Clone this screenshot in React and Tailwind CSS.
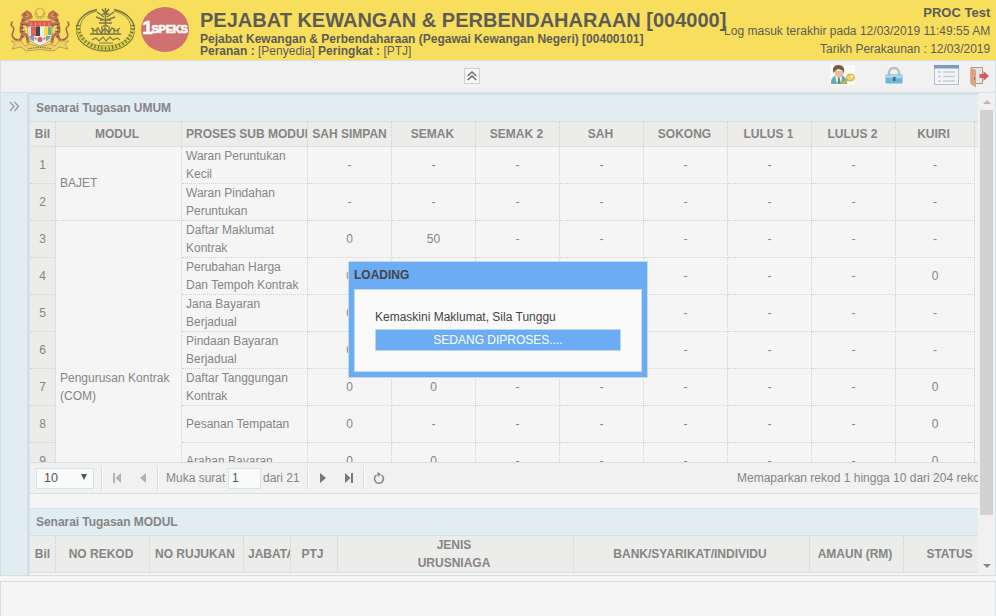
import React from "react";

const columns = ["SAH SIMPAN", "SEMAK", "SEMAK 2", "SAH", "SOKONG", "LULUS 1", "LULUS 2", "KUIRI"];

const rows = [
  ["Waran Peruntukan Kecil", "- - - - - - - -"],
  ["Waran Pindahan Peruntukan", "- - - - - - - -"],
  ["Daftar Maklumat Kontrak", "0 50 - - - - - -"],
  ["Perubahan Harga Dan Tempoh Kontrak", "0 - - - - - - 0"],
  ["Jana Bayaran Berjadual", "0 - - - - - - -"],
  ["Pindaan Bayaran Berjadual", "0 - - - - - - -"],
  ["Daftar Tanggungan Kontrak", "0 0 - - - - - 0"],
  ["Pesanan Tempatan", "0 - - - - - - 0"],
  ["Arahan Bayaran", "0 0 - - - - - 0"],
];

const dot = "border-r border-dotted border-[#d2d2d2]";
const cellWidth = (i) => (i === 7 ? "w-[79px]" : "w-[84px]");

function Tiger() {
  return (
    <g fill="none" strokeLinecap="round">
      <path d="M14 8l4-3 3 2 1 3-4 2M16 9l-3 7-1 8 2 4-3 5M14 16l6 2M14 26l4 3 1 6" stroke="#c07350" strokeWidth="3.2" />
      <path d="M15 7l4 2M13 13l4 1M12 17l4 1M11 21l4 0M12 25l4-1M12 29l3 1M18 17v3M18 31h2" stroke="#70504a" strokeWidth="1" />
      <path d="M10 33c-6 0-8-4-6-8s0-5-2-7l1-3" stroke="#b0654a" strokeWidth="1.6" />
    </g>
  );
}

function Crest() {
  return (
    <svg width="62" height="46" viewBox="0 0 62 46">
      <circle cx="31" cy="6.500" r="5" fill="none" stroke="#cdb452" strokeWidth="1.600" strokeDasharray="1.600 .6" />
      <path d="M27.500 5a3.700 3.700 0 1 0 7 0" fill="none" stroke="#b69d4b" strokeWidth="1" />
      <Tiger />
      <g transform="translate(62 0) scale(-1 1)"><Tiger /></g>
      <path d="M19 14h24v14q0 7-12 11q-12-4-12-11z" fill="#f0ede6" stroke="#9a8973" strokeWidth=".7" />
      <path d="M19 14h24v5.500H19z" fill="#df5c56" />
      <path d="M22 15.500v3M26.500 15.500v3M31 15.500v3M35.500 15.500v3M40 15.500v3" stroke="#edc96c" strokeWidth=".7" />
      <path d="M22 19.500h5V29h-5z" fill="#e0605b" />
      <path d="M27 19.500h4V29h-4z" fill="#484848" />
      <path d="M31 19.500h4V29h-4z" fill="#f1eee8" />
      <path d="M35 19.500h4V29h-4z" fill="#f3db4b" />
      <path d="M19.500 20h2.500v8h-2.500z" fill="#d3e4e5" />
      <path d="M39 20h3.500v8H39z" fill="#72b07d" />
      <path d="M20 29h5v5.500q-4-2-5-5.500z" fill="#6fa3bb" />
      <path d="M37 29h5q-1 3-5 5.500z" fill="#79aa8b" />
      <circle cx="31" cy="32.500" r="2.600" fill="#ce6262" />
      <circle cx="26.500" cy="31.500" r="1.200" fill="#d8807c" />
      <circle cx="35.500" cy="31.500" r="1.200" fill="#d8807c" />
      <path d="M2 34l10 0 4 5 5-2q10 5 20 0l5 2 4-5 10 0-4 3 3 5-9-2-5 4q-14-3-28 0l-5-4-9 2 3-5z" fill="#edd264" stroke="#b79b4e" strokeWidth=".9" />
      <path d="M19 42q12-3 24 0" fill="none" stroke="#8f7745" strokeWidth="1.200" strokeDasharray="1.400 1" />
    </svg>
  );
}

function Seal() {
  return (
    <svg width="61" height="46" viewBox="0 0 61 46">
      <path d="M22 2.500C10 5 1.500 13 1.500 23c0 12 13 21 29 21s29-9 29-21C59.500 13 51 5 39 2.500" fill="none" stroke="#77743f" strokeWidth="1.300" />
      <path d="M22 4C10 7 5 14 5 22c0 10 11 17 25.500 17S56 32 56 22c0-8-5-15-17-18" fill="none" stroke="#77743f" strokeWidth=".8" />
      <path d="M3 22c1 11 12 19.500 27.500 19.500S57 33 58 22" fill="none" stroke="#d5cf3e" strokeWidth="4" />
      <path d="M3 18c0 13 12 23.500 27.500 23.500S58 31 58 18" fill="none" stroke="#66663f" strokeWidth="3.600" strokeDasharray="1.100 2.500" />
      <g fill="none" stroke="#7c7945">
        <path d="M30.500 1v17M27 2l3 4M34 2l-3 4M22 5l7 5M39 5l-7 5M21 10l8 3M40 10l-8 3M24 16h13M27 7h7M25 13h11M28 19h5" strokeWidth="1.500" />
        <path d="M16 21l4 3 3-3 3 5 4-5 4 5 3-5 4 3 4-3M15 27h31M18 21v7M22 23v5M27 19v9M30 21v7M34 19v9M39 21v7M43 22v5" strokeWidth="1.300" />
        <path d="M17 33l4-2 3 3 4-4 3 4 4-4 3 3 4-2 3 2M24 36h14" strokeWidth="1.100" />
      </g>
    </svg>
  );
}

function UserKey() {
  return (
    <svg width="25" height="20" viewBox="0 0 25 20">
      <path d="M0 0h25v20H0z" fill="#fafafa" />
      <path d="M1 19c0-5 1-7 5-8.500h6c3 1 5 4 5 8.500z" fill="#62adb7" />
      <path d="M5 10.500L9 13l3-2.500-1 8.500H7z" fill="#f7f7f7" />
      <path d="M8 12.500h1.500L11 19H7.500z" fill="#4f9a67" />
      <path d="M4.500 6c0 4 2 6.500 4.500 6.500s5-2.500 5-6.500z" fill="#e8bd9b" />
      <path d="M3.500 8C2 3 4 0 8.500 0S15 3 14 8l-1.500-2.500L8 4 5 6z" fill="#7d573f" />
      <path d="M20 13l-8 5.500" stroke="#d7ad45" strokeWidth="2.500" />
      <ellipse cx="20.500" cy="12.500" rx="4" ry="3.500" fill="#f0d06a" stroke="#d3ad48" />
      <circle cx="22" cy="11.500" r="1" fill="#fff" />
    </svg>
  );
}

function Lock() {
  return (
    <svg width="18" height="17" viewBox="0 0 18 17">
      <path d="M4 9V6a5 5 0 0 1 10 0v3" fill="none" stroke="#b9bec2" strokeWidth="2.500" />
      <rect x=".5" y="7.500" width="17" height="9" rx="1" fill="#70b6d6" />
      <path d="M1 8h16v3H1z" fill="#a8d6e8" />
      <path d="M8 10h2.500v4H8z" fill="#416d82" />
    </svg>
  );
}

function ListIcon() {
  return (
    <svg width="25" height="20" viewBox="0 0 25 20">
      <path d="M.5.5h24v19H.5z" fill="#f2f5f8" stroke="#b0bfd5" />
      <path d="M0 0h25v3.500H0z" fill="#8197c5" />
      <path d="M4 7h3M9 7h12M4 11.500h3M9 11.500h12M4 16h3M9 16h12" stroke="#c7cbd0" strokeWidth="1.300" />
    </svg>
  );
}

function Exit() {
  return (
    <svg width="20" height="21" viewBox="0 0 20 21">
      <path d="M1 .5h11.500v16H1z" fill="#dfe5e9" stroke="#c2937a" />
      <path d="M.5.500L6 3v17.500L.5 17z" fill="#d9a47f" />
      <path d="M4.500 10.500v2" stroke="#8c6048" />
      <path d="M9.500 7h4V4l5.500 5-5.500 5v-3h-4z" fill="#d65b5f" />
    </svg>
  );
}

function HeaderCell({ className, children }) {
  return (
    <div className={`flex shrink-0 items-center justify-center overflow-hidden whitespace-nowrap text-center font-bold ${dot} ${className}`}>
      {children}
    </div>
  );
}

function Separator() {
  return <div className="h-6 w-[2px] shrink-0 border-l border-[#dcdcdc] bg-[#fbfbfb]" />;
}

function TaskGrid() {
  return (
    <section className="flex h-[399px] shrink-0 flex-col border-b border-[#d3e1e5]">
      <h2 className="h-[27px] shrink-0 border-b border-[#d3e1e5] bg-[#e2edf2] pl-1.5 font-bold leading-[26px] tracking-[-0.04px]">Senarai Tugasan UMUM</h2>
      <div className="flex h-[25px] shrink-0 border-b border-[#dedede] bg-[#ececea]">
        <HeaderCell className="w-[26px]">Bil</HeaderCell>
        <HeaderCell className="w-[126px] pr-[3px]">MODUL</HeaderCell>
        <div className={`w-[126px] shrink-0 overflow-hidden whitespace-nowrap pl-1 font-bold leading-[24px] ${dot}`}>PROSES SUB MODUL</div>
        {columns.map((c, i) => (
          <HeaderCell key={c} className={`${cellWidth(i)} ${i === 0 ? "" : i === 7 ? "pr-[3px]" : "pr-[2px]"}`}>{c}</HeaderCell>
        ))}
      </div>
      <div className="flex h-[315px] shrink-0 items-start overflow-hidden">
        <div className="shrink-0">
          {rows.map((r, i) => (
            <div key={i} className={`flex h-[37px] w-[26px] items-center justify-center border-b bg-[#ececea] ${dot}`}>{i + 1}</div>
          ))}
        </div>
        <div className="w-[126px] shrink-0">
          <div className={`flex h-[74px] items-center border-b pb-px pl-1 ${dot}`}>BAJET</div>
          <div className={`flex h-[333px] items-center border-b pl-1 ${dot}`}>Pengurusan Kontrak (COM)</div>
        </div>
        <div className="shrink-0">
          {rows.map(([name, values], i) => (
            <div key={i} className="flex h-[37px]">
              <div className={`flex w-[126px] items-center border-b pl-1 pr-1 ${dot}`}>{name}</div>
              {values.split(" ").map((v, k) => (
                <div key={k} className={`flex items-center justify-center border-b ${dot} ${cellWidth(k)}`}>{v}</div>
              ))}
            </div>
          ))}
        </div>
      </div>
      <div className="flex h-[31px] items-center whitespace-nowrap border-t border-[#dedede] bg-[#f1f1f1] pl-1.5">
        <div className="flex h-[21px] w-[58px] shrink-0 items-center justify-between border border-[#d3e5eb] bg-[#fafafa] pl-[7px] pr-1.5 text-[#555]">
          <span className="text-[12.5px]">10</span>
          <svg className="mb-0.5" width="6" height="6" viewBox="0 0 6 6"><path d="M0 0h6L3 6z" fill="#555" /></svg>
        </div>
        <div className="ml-[7px] flex"><Separator /></div>
        <svg className="ml-2.5 shrink-0" width="8" height="10" viewBox="0 0 8 10"><path d="M0 0h2v10H0zM8 0v10L2.500 5z" fill="#b3b3b3" /></svg>
        <svg className="ml-[19px] shrink-0" width="6" height="10" viewBox="0 0 6 10"><path d="M6 0v10L0 5z" fill="#b3b3b3" /></svg>
        <div className="ml-[11px] flex"><Separator /></div>
        <span className="ml-[7px] w-[62px] shrink-0">Muka surat</span>
        <div className="h-[21px] w-[33px] shrink-0 border border-[#d3e5eb] bg-[#fafafa] pl-[3px] leading-[19px] text-[#555]">1</div>
        <span className="ml-0.5 w-[44px] shrink-0">dari 21</span>
        <Separator />
        <svg className="ml-[11px] shrink-0" width="6" height="10" viewBox="0 0 6 10"><path d="M0 0v10L6 5z" fill="#777" /></svg>
        <svg className="ml-[19px] shrink-0" width="8" height="10" viewBox="0 0 8 10"><path d="M0 0v10l5.500-5zM6 0h2v10H6z" fill="#777" /></svg>
        <div className="ml-[10px] flex"><Separator /></div>
        <svg className="mb-px ml-[8px] shrink-0" width="12" height="12" viewBox="0 0 12 12"><path d="M3.500 3A4.500 4.500 0 1 0 8.500 3" fill="none" stroke="#858585" strokeWidth="1.500" /><path d="M4.500 0v5L8 2.300z" fill="#858585" /></svg>
        <span className="ml-[352px]">Memaparkan rekod 1 hingga 10 dari 204 rekod</span>
      </div>
    </section>
  );
}

function ModuleGrid() {
  return (
    <section className="mt-[14px] flex h-[65px] shrink-0 flex-col border-t border-[#d3e1e5]">
      <h2 className="h-[27px] shrink-0 border-b border-[#d3e1e5] bg-[#e2edf2] pl-1.5 font-bold leading-[26px] tracking-[-0.04px]">Senarai Tugasan MODUL</h2>
      <div className="flex h-[37px] shrink-0 border-b border-[#dedede] bg-[#ececea]">
        <HeaderCell className="w-[26px]">Bil</HeaderCell>
        <HeaderCell className="w-[94px] pr-[3px]">NO REKOD</HeaderCell>
        <HeaderCell className="w-[94px] pr-[3px]">NO RUJUKAN</HeaderCell>
        <div className={`w-[47px] shrink-0 overflow-hidden pl-1 font-bold leading-[36px] ${dot}`}>JABATAN</div>
        <HeaderCell className="w-[47px] pr-[3px]">PTJ</HeaderCell>
        <HeaderCell className="w-[236px] pr-[3px]">JENIS<br />URUSNIAGA</HeaderCell>
        <HeaderCell className="w-[236px] pr-[3px]">BANK/SYARIKAT/INDIVIDU</HeaderCell>
        <HeaderCell className="w-[94px] pr-[3px]">AMAUN (RM)</HeaderCell>
        <HeaderCell className="w-[92px]">STATUS</HeaderCell>
      </div>
    </section>
  );
}

function LoadingDialog() {
  return (
    <div className="absolute left-[348px] top-[261px] h-[117px] w-[300px] border border-[#c2dce6] bg-[#6bacf5] px-[5px] text-[#444]">
      <div className="h-[27px] font-bold leading-[26px]">LOADING</div>
      <div className="h-[83px] border border-[#c5dce4] bg-[#fafafa] px-5 pt-[18px]">
        <div className="h-[21px] leading-[19px]">Kemaskini Maklumat, Sila Tunggu</div>
        <div className="h-[22px] w-[246px] border border-[#bed9e4] bg-[#6bacf5] text-center leading-[20px] text-white">SEDANG DIPROSES....</div>
      </div>
    </div>
  );
}

export default function App() {
  return (
    <div className="relative flex h-[616px] w-[996px] flex-col overflow-hidden bg-[#f5f5f5] font-['Liberation_Sans',Arial,sans-serif] text-[12px] leading-[18px] text-[#858585]">
      <header className="flex h-[60px] shrink-0 bg-[#f7df5d] text-[#5e5c56]">
        <div className="flex w-[200px] shrink-0 pl-[9px] pt-[7px]">
          <Crest />
          <div className="ml-[4px]"><Seal /></div>
          <div className="ml-[5px] flex h-[45px] w-[48px] items-center justify-center rounded-[50%] bg-[#d17071] text-white">
            <span className="mb-1 text-[19px] font-bold leading-none tracking-[-1.5px] [-webkit-text-stroke:0.5px_white]">1</span>
            <span className="text-[11px] font-bold leading-none tracking-[-0.2px] [-webkit-text-stroke:0.7px_white]">SPEKS</span>
          </div>
        </div>
        <div className="w-[524px] shrink-0 whitespace-nowrap pt-[9px]">
          <h1 className="h-6 text-[20px] font-bold leading-[22px]">PEJABAT KEWANGAN &amp; PERBENDAHARAAN [004000]</h1>
          <div className="h-3 font-bold leading-[13px]">Pejabat Kewangan &amp; Perbendaharaan (Pegawai Kewangan Negeri) [00400101]</div>
          <div className="leading-[13px]"><b>Peranan :</b> [Penyedia] <b>Peringkat :</b> [PTJ]</div>
        </div>
        <div className="flex flex-1 flex-col items-end whitespace-nowrap pr-[6px] pt-[4px]">
          <b className="text-[13px] leading-[18px]">PROC Test</b>
          <span className="tracking-[0.02px]">Log masuk terakhir pada 12/03/2019 11:49:55 AM</span>
          <span>Tarikh Perakaunan : 12/03/2019</span>
        </div>
      </header>

      <div className="flex h-[32px] shrink-0 border-x border-t border-[#d3e1e5] bg-[#f1f1f1]">
        <div className="flex w-[829px] shrink-0 pl-[463px] pt-[7px]">
          <div className="flex h-4 w-4 items-center justify-center border border-[#cfcfcf] bg-[#f6f6f6]">
            <svg width="10" height="10" viewBox="0 0 10 10"><path d="M.7 5L5 1l4.300 4M.7 9L5 5l4.300 4" fill="none" stroke="#666" strokeWidth="1.300" /></svg>
          </div>
        </div>
        <div className="pt-1"><UserKey /></div>
        <div className="ml-[30px] pt-[6px]"><Lock /></div>
        <div className="ml-[31px] pt-1"><ListIcon /></div>
        <div className="ml-[11px] pt-[6px]"><Exit /></div>
      </div>

      <main className="flex h-[484px] shrink-0 border-x border-y border-[#d3e1e5]">
        <aside className="flex w-[26px] shrink-0 justify-center bg-[#e2edf2] pt-[8px]">
          <svg width="11" height="11" viewBox="0 0 11 11"><path d="M1 1l4 4.500L1 10M5.500 1l4 4.500-4 4.500" fill="none" stroke="#999" strokeWidth="1.300" /></svg>
        </aside>
        <div className="w-[3px] shrink-0 bg-[#d3e1e5]" />
        <div className="flex w-[948px] shrink-0 flex-col overflow-hidden border-t-2 border-[#d3e1e5] bg-[#f5f5f5]">
          <TaskGrid />
          <ModuleGrid />
        </div>
        <div className="flex flex-1 flex-col items-center bg-[#f1f1f1]">
          <svg className="mt-[7px] shrink-0" width="8" height="4" viewBox="0 0 8 4"><path d="M0 4l4-4 4 4z" fill="#b9b9b9" /></svg>
          <div className="mt-[6px] h-[405px] w-[13px] shrink-0 bg-[#d2d2d2]" />
          <svg className="mt-[49px] shrink-0" width="8" height="4" viewBox="0 0 8 4"><path d="M0 0l4 4 4-4z" fill="#888" /></svg>
        </div>
      </main>

      <footer className="mt-[5px] flex-1 border-x border-t border-[#d3e1e5]" />
      <LoadingDialog />
    </div>
  );
}
